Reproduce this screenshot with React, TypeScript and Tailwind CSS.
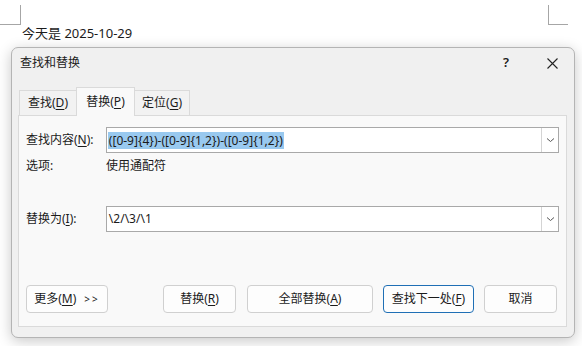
import React from 'react';

const font = { fontFamily: '"Noto Sans", "Noto Sans CJK SC", sans-serif' };

function U({ children }: { children: React.ReactNode }) {
  return <span className="underline underline-offset-2">{children}</span>;
}

function Combo({ children }: { children: React.ReactNode }) {
  return (
    <div className="flex h-[26px] w-[454px] items-stretch border border-[#a9a9a9] bg-white">
      <div className="flex flex-1 items-center pl-[1px]">{children}</div>
      <div className="flex w-[17px] items-center justify-center border-l border-[#d4d4d4]">
        <svg width="9" height="6" viewBox="0 0 9 6">
          <path d="M1 1.5 L4.5 4.5 L8 1.5" fill="none" stroke="#555" strokeWidth="1" />
        </svg>
      </div>
    </div>
  );
}

function Btn({ w, focus, children }: { w: string; focus?: boolean; children: React.ReactNode }) {
  return (
    <button
      className={
        'flex h-[28px] items-center justify-center rounded-[4px] border bg-[#fdfdfd] text-[12px] text-[#1b1b1b] ' +
        w +
        (focus ? ' border-[#1f6fb5]' : ' border-[#d0d0d0]')
      }
    >
      {children}
    </button>
  );
}

export default function App() {
  return (
    <div className="relative h-[346px] w-[582px] overflow-hidden bg-white text-[#1b1b1b]" style={font}>
      {/* page margin marks */}
      <div className="absolute left-0 top-[5px] h-[20px] w-[21px] border-b border-r border-[#a6a6a6]" />
      <div className="absolute left-[548px] top-[5px] h-[20px] w-[20px] border-b border-l border-[#a6a6a6]" />

      <div className="pl-[22px] pt-[25px] text-[13px] leading-[17px]">今天是 2025-10-29</div>

      {/* dialog */}
      <div className="absolute left-[11px] top-[47px] flex h-[291px] w-[564px] flex-col rounded-[7px] border border-[#b4b4b4] bg-[#f0f0f0] shadow-[0_3px_14px_rgba(0,0,0,0.22)]">
        {/* title bar */}
        <div className="flex h-[30px] items-center pl-[8px] pr-[16px] text-[12px]">
          <span className="flex-1">查找和替换</span>
          <span className="mr-[38px] text-[13px] font-semibold">?</span>
          <svg width="11" height="11" viewBox="0 0 11 11">
            <path d="M0.5 0.5 L10.5 10.5 M10.5 0.5 L0.5 10.5" stroke="#222" strokeWidth="1.1" />
          </svg>
        </div>

        {/* tabs */}
        <div className="mt-[9px] flex h-[28px] items-end pl-[7px] text-[12px]">
          <div className="flex h-[25px] w-[57px] items-center justify-center border-l border-t border-[#dadada] bg-[#f2f2f2]">
            查找(<U>D</U>)
          </div>
          <div className="relative z-10 -mb-px flex h-[29px] w-[59px] items-center justify-center border-l border-r border-t border-[#dadada] bg-[#f9f9f9]">
            替换(<U>P</U>)
          </div>
          <div className="flex h-[25px] w-[55px] items-center justify-center border-r border-t border-[#dadada] bg-[#f2f2f2]">
            定位(<U>G</U>)
          </div>
        </div>

        {/* panel */}
        <div className="ml-[6px] flex h-[212px] w-[549px] flex-col border border-[#dadada] bg-[#f9f9f9] px-[7px] pt-[11px] text-[12px]">
          <div className="flex items-center">
            <span className="w-[80px]">
              查找内容(<U>N</U>):
            </span>
            <Combo>
              <span className="bg-[#99c9ef] px-[1px] leading-[17px]">([0-9]{'{4}'})-([0-9]{'{1,2}'})-([0-9]{'{1,2}'})</span>
            </Combo>
          </div>
          <div className="mt-[4px] flex h-[18px] items-center">
            <span className="w-[80px]">选项:</span>
            <span>使用通配符</span>
          </div>
          <div className="mt-[31px] flex items-center">
            <span className="w-[80px]">
              替换为(<U>I</U>):
            </span>
            <Combo>
              <span className="px-[1px]">\2/\3/\1</span>
            </Combo>
          </div>
          <div className="mt-[53px] flex items-center">
            <Btn w="w-[82px]">
              <span>
                更多(<U>M</U>)
              </span>
              <span className="ml-[8px] text-[10px] tracking-[2px]">&gt;&gt;</span>
            </Btn>
            <div className="ml-[55px]">
              <Btn w="w-[73px]">
                替换(<U>R</U>)
              </Btn>
            </div>
            <div className="ml-[11px]">
              <Btn w="w-[126px]">
                全部替换(<U>A</U>)
              </Btn>
            </div>
            <div className="ml-[10px]">
              <Btn w="w-[91px]" focus>
                查找下一处(<U>F</U>)
              </Btn>
            </div>
            <div className="ml-[10px]">
              <Btn w="w-[73px]">取消</Btn>
            </div>
          </div>
        </div>
      </div>
    </div>
  );
}
